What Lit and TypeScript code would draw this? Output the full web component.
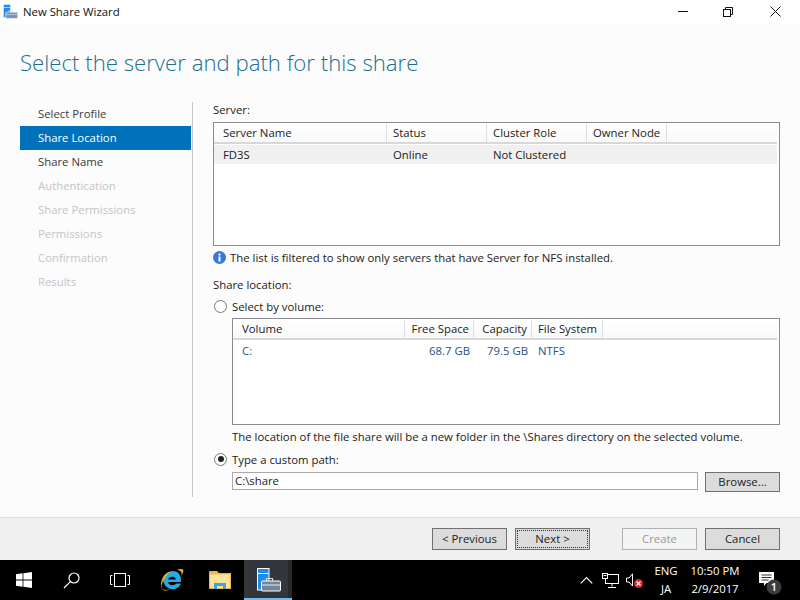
import { LitElement, html, css } from "lit";
import { customElement } from "lit/decorators.js";

const steps = [
  { label: "Select Profile", cls: "" },
  { label: "Share Location", cls: "active" },
  { label: "Share Name", cls: "" },
  { label: "Authentication", cls: "off" },
  { label: "Share Permissions", cls: "off" },
  { label: "Permissions", cls: "off" },
  { label: "Confirmation", cls: "off" },
  { label: "Results", cls: "off" },
];

const shareIcon = (size: number, outline: string, body: string) => html`
  <svg width=${size} height=${size} viewBox="0 0 24 24">
    <rect x="0.500" y="0.500" width="11.500" height="21.500" fill="#1f8be6" stroke=${outline} stroke-width="1"></rect>
    <path d="M1 5.500h10.500" stroke=${outline} stroke-width="1"></path>
    <path d="M9.500 13v-2.500h6V13" fill="none" stroke="#d5dade" stroke-width="1.200"></path>
    <rect x="4.500" y="13" width="19" height="10" rx="1" fill=${body} stroke="#fff" stroke-width="1"></rect>
    <path d="M5 17h18" stroke="#e6eaee" stroke-width="1"></path>
  </svg>
`;

@customElement("app-root")
export class AppRoot extends LitElement {
  static styles = css`
    :host {
      display: flex;
      flex-direction: column;
      width: 800px;
      height: 600px;
      overflow: hidden;
      font-family: "Open Sans", "Noto Sans", sans-serif;
      font-size: 11.35px;
      color: #222;
      background: #fcfcfc;
    }
    .titlebar {
      height: 23px;
      background: #fff;
      display: flex;
      align-items: center;
      flex: none;
    }
    .appicon {
      display: flex;
      margin: 0 5px 0 3px;
    }
    .title {
      flex: 1;
      color: #111;
    }
    .winbtn {
      width: 45px;
      height: 23px;
      display: flex;
      align-items: center;
      justify-content: center;
    }
    .winbtn.close {
      width: 50px;
    }
    .heading {
      height: 56px;
      flex: none;
      padding: 23px 0 0 20px;
      box-sizing: border-box;
      font-size: 22.2px;
      font-weight: 300;
      line-height: 34px;
      color: #1b6f92;
    }
    .body {
      flex: 1;
      display: flex;
      min-height: 0;
      padding-top: 23px;
    }
    .nav {
      width: 172px;
      height: 395px;
      margin-left: 20px;
      margin-right: 20px;
      box-shadow: 1px 0 0 #c6c6c6;
    }
    .step {
      width: 171px;
      height: 24px;
      line-height: 24px;
      padding-left: 18px;
      box-sizing: border-box;
      color: #3a3a3a;
    }
    .step.active {
      background: #0072bc;
      color: #fff;
    }
    .step.off {
      color: #c4c4c4;
    }
    .main {
      width: 567px;
      margin-left: 1px;
      display: flex;
      flex-direction: column;
    }
    .label {
      height: 15px;
      line-height: 15px;
    }
    .list {
      border: 1px solid #8a8a92;
      background: #fff;
      box-sizing: border-box;
      padding: 1px 2px 0 0;
      flex: none;
    }
    .list.servers {
      height: 124px;
      margin-top: 5px;
    }
    .list.volumes {
      height: 107px;
      margin: 4px 0 0 19px;
    }
    .head,
    .row {
      display: grid;
    }
    .head {
      height: 20px;
      line-height: 18px;
      box-sizing: border-box;
      border-bottom: 2px solid #d8d8d8;
      background: linear-gradient(#fff, #f8f9f9);
    }
    .servers .head,
    .servers .row {
      grid-template-columns: 173px 100px 100px 80px 1fr;
    }
    .volumes .head,
    .volumes .row {
      grid-template-columns: 172px 69px 58px 71px 1fr;
    }
    .head > span {
      border-right: 1px solid #dedede;
      padding-left: 6px;
      white-space: nowrap;
    }
    .head > span:first-child,
    .row > span:first-child {
      padding-left: 9px;
    }
    .head > span:last-child {
      border-right: none;
    }
    .row {
      margin-top: 1px;
      height: 19px;
      line-height: 20px;
    }
    .row > span {
      padding-left: 6px;
      white-space: nowrap;
    }
    .servers .row {
      background: #f0f0f0;
    }
    .volumes .row {
      color: #26528a;
    }
    .volumes .head > span:nth-child(2),
    .volumes .head > span:nth-child(3),
    .volumes .row > span:nth-child(2),
    .volumes .row > span:nth-child(3) {
      text-align: right;
      padding: 0 4px 0 0;
    }
    .info {
      display: flex;
      align-items: center;
      gap: 4px;
      height: 16px;
      margin-top: 3px;
    }
    .share-label {
      margin-top: 12px;
    }
    .radio {
      display: flex;
      align-items: center;
      gap: 5px;
      height: 16px;
      margin: 6px 0 0 1px;
    }
    .dot {
      width: 13px;
      height: 13px;
      box-sizing: border-box;
      border: 1px solid #7a7a7a;
      border-radius: 50%;
      background: #fff;
      display: flex;
      align-items: center;
      justify-content: center;
    }
    .dot.on::after {
      content: "";
      width: 6px;
      height: 6px;
      border-radius: 50%;
      background: #222;
    }
    .note {
      margin: 4px 0 0 19px;
      height: 16px;
      line-height: 16px;
    }
    .path {
      display: flex;
      margin: 5px 0 0 19px;
      gap: 7px;
      align-items: flex-start;
    }
    .input {
      width: 466px;
      height: 18px;
      line-height: 16px;
      box-sizing: border-box;
      border: 1px solid #a9a9a9;
      background: #fff;
      padding-left: 2px;
    }
    .btn {
      width: 75px;
      height: 22px;
      line-height: 20px;
      box-sizing: border-box;
      border: 1px solid #707070;
      background: #dcdcdc;
      text-align: center;
      flex: none;
      color: #222;
    }
    .path .btn {
      height: 20px;
      line-height: 18px;
    }
    .btn.default {
      position: relative;
    }
    .btn.default::after {
      content: "";
      position: absolute;
      inset: 1px;
      border: 1px dotted #333;
    }
    .btn.disabled {
      background: #f4f4f4;
      border-color: #adb2b5;
      color: #9a9a9a;
    }
    .footer {
      height: 43px;
      flex: none;
      box-sizing: border-box;
      border-top: 1px solid #dfdfdf;
      background: #f0f0f0;
      display: flex;
      justify-content: flex-end;
      align-items: flex-start;
      padding: 10px 20px 0 0;
    }
    .footer .btn + .btn {
      margin-left: 8px;
    }
    .footer .btn.disabled {
      margin-left: 32px;
    }
    .taskbar {
      height: 40px;
      flex: none;
      background: #000;
      display: flex;
      color: #fff;
    }
    .tile {
      width: 48px;
      height: 40px;
      display: flex;
      align-items: center;
      justify-content: center;
      box-sizing: border-box;
    }
    .tile.gap {
      margin-left: 4px;
    }
    .tile.current {
      background: linear-gradient(to right, #33363a 44px, #26282b 44px);
      border-bottom: 2px solid #76b9ed;
      padding: 2px 0 0 2px;
    }
    .tray {
      margin-left: auto;
      display: flex;
      align-items: center;
    }
    .tray-icon {
      width: 24px;
      display: flex;
      justify-content: center;
    }
    .lang,
    .clock {
      text-align: center;
      line-height: 18px;
    }
    .lang {
      width: 34px;
      margin-left: 3px;
    }
    .clock {
      width: 68px;
      margin-left: -2px;
    }
    .notif {
      width: 51px;
      padding-left: 9px;
      box-sizing: border-box;
      display: flex;
    }
    .notif svg {
      margin-top: 6px;
    }
  `;

  renderTaskbar() {
    return html`
      <div class="taskbar">
        <div class="tile">
          <svg width="16" height="16" viewBox="0 0 16 16" fill="#fff">
            <path d="M0 2.300 6.600 1.300V7.600H0ZM7.400 1.200 16 0V7.600H7.400ZM0 8.400H6.600V14.700L0 13.700ZM7.400 8.400H16V16L7.400 14.800Z"></path>
          </svg>
        </div>
        <div class="tile">
          <svg width="18" height="18" viewBox="0 0 18 18" fill="none" stroke="#fff" stroke-width="1.200">
            <circle cx="11" cy="7" r="5"></circle>
            <path d="M7.400 10.600 1 17"></path>
          </svg>
        </div>
        <div class="tile">
          <svg width="20" height="14" viewBox="0 0 20 14" fill="none" stroke="#fff" stroke-width="1">
            <rect x="4.500" y="0.500" width="11" height="13"></rect>
            <path d="M2.500 2.500H.5v9h2M17.500 2.500h2v9h-2"></path>
          </svg>
        </div>
        <div class="tile gap">
          <svg width="24" height="24" viewBox="0 0 24 24">
            <path d="M3 12C4 6 9 3 13 3c5 0 8 4 8 9v2H8c.3 3 5 4.500 8.500 1.500H21c-2 5-8 7-12 5-4-2-6-6-6-8Zm5.200-.6h7.600C15.500 8 9 8 8.200 11.400Z" fill="#2ba7e2"></path>
            <path d="M2 20.500C0 16 6 7 11 3.500 6 4 1.500 9 1 16c0 3 .5 5.500 3 6.500 1.500.5 4-.2 6-1.500-3 1-6.500 1.500-8-.500ZM17 2c2.500-1 5-1.500 6-.5 1 1.200 0 3.500-1.500 6C22 4.500 21.500 2.500 17 2Z" fill="#e6b31e"></path>
          </svg>
        </div>
        <div class="tile">
          <svg width="22" height="18" viewBox="0 0 22 18">
            <path d="M0 1A1 1 0 0 1 1 0H8l2 2H22V18H1a1 1 0 0 1-1-1Z" fill="#e9b94f"></path>
            <path d="M1 3.500H21V17H1Z" fill="#fbe49a"></path>
            <path d="M5 18V12h12v6h-3v-3H8v3Z" fill="#3aa5e3"></path>
          </svg>
        </div>
        <div class="tile current">${shareIcon(24, "#fff", "#74879a")}</div>
        <div class="tray">
          <div class="tray-icon">
            <svg width="13" height="8" viewBox="0 0 13 8" fill="none" stroke="#fff" stroke-width="1.200">
              <path d="M.7 7.300 6.500 1.500l5.800 5.800"></path>
            </svg>
          </div>
          <div class="tray-icon">
            <svg width="17" height="15" viewBox="0 0 17 15" fill="none" stroke="#fff" stroke-width="1">
              <rect x="3.500" y="1.500" width="13" height="9"></rect>
              <path d="M10 10.500v3M6 14.500h8"></path>
              <rect x="0.500" y="0.500" width="5" height="5" fill="#000"></rect>
              <path d="M1.500 2.500h3"></path>
            </svg>
          </div>
          <div class="tray-icon">
            <svg width="17" height="15" viewBox="0 0 17 15">
              <path d="M.5 5H3L6.500.8V13L3 9H.5Z" fill="none" stroke="#fff" stroke-width="1"></path>
              <circle cx="12.500" cy="10.500" r="4.500" fill="#d9262c"></circle>
              <path d="M10.500 8.500l4 4m0-4-4 4" stroke="#fff" stroke-width="1.300"></path>
            </svg>
          </div>
          <div class="lang">ENG<br />JA</div>
          <div class="clock">10:50 PM<br />2/9/2017</div>
          <div class="notif">
            <svg width="24" height="26" viewBox="0 0 24 26">
              <path d="M1 2H16V13H8.500L6 16V13H1Z" fill="#fff"></path>
              <path d="M3.500 5h10M3.500 7.500h10M3.500 10h7" stroke="#333" stroke-width="1"></path>
              <circle cx="16" cy="17" r="7.500" fill="#3d3d3d"></circle>
              <text x="16" y="21" fill="#fff" font-size="11" font-weight="600" text-anchor="middle">1</text>
            </svg>
          </div>
        </div>
      </div>
    `;
  }

  render() {
    return html`
      <div class="titlebar">
        <span class="appicon">${shareIcon(15, "#fff", "#6f93b8")}</span>
        <span class="title">New Share Wizard</span>
        <div class="winbtn">
          <svg width="10" height="1" viewBox="0 0 10 1"><rect width="10" height="1" fill="#111"></rect></svg>
        </div>
        <div class="winbtn">
          <svg width="10" height="10" viewBox="0 0 10 10" fill="none" stroke="#111" stroke-width="1">
            <rect x="0.500" y="2.500" width="7" height="7"></rect>
            <path d="M2.500 2.500v-2h7v7h-2"></path>
          </svg>
        </div>
        <div class="winbtn close">
          <svg width="11" height="11" viewBox="0 0 11 11" fill="none" stroke="#111" stroke-width="1">
            <path d="M.5.500l10 10m0-10-10 10"></path>
          </svg>
        </div>
      </div>
      <div class="heading">Select the server and path for this share</div>
      <div class="body">
        <div class="nav">
          ${steps.map((s) => html`<div class="step ${s.cls}">${s.label}</div>`)}
        </div>
        <div class="main">
          <div class="label">Server:</div>
          <div class="list servers">
            <div class="head">
              <span>Server Name</span><span>Status</span><span>Cluster Role</span><span>Owner Node</span><span></span>
            </div>
            <div class="row">
              <span>FD3S</span><span>Online</span><span>Not Clustered</span><span></span><span></span>
            </div>
          </div>
          <div class="info">
            <svg width="13" height="13" viewBox="0 0 13 13">
              <circle cx="6.500" cy="6.500" r="6.500" fill="#3a78d8"></circle>
              <rect x="5.500" y="5.500" width="2" height="5" fill="#fff"></rect>
              <rect x="5.500" y="2.500" width="2" height="2" fill="#fff"></rect>
            </svg>
            <span>The list is filtered to show only servers that have Server for NFS installed.</span>
          </div>
          <div class="label share-label">Share location:</div>
          <div class="radio"><span class="dot"></span><span>Select by volume:</span></div>
          <div class="list volumes">
            <div class="head">
              <span>Volume</span><span>Free Space</span><span>Capacity</span><span>File System</span><span></span>
            </div>
            <div class="row">
              <span>C:</span><span>68.7 GB</span><span>79.5 GB</span><span>NTFS</span><span></span>
            </div>
          </div>
          <div class="note">The location of the file share will be a new folder in the \\Shares directory on the selected volume.</div>
          <div class="radio"><span class="dot on"></span><span>Type a custom path:</span></div>
          <div class="path">
            <div class="input">C:\\share</div>
            <div class="btn">Browse...</div>
          </div>
        </div>
      </div>
      <div class="footer">
        <div class="btn">&lt; Previous</div>
        <div class="btn default">Next &gt;</div>
        <div class="btn disabled">Create</div>
        <div class="btn">Cancel</div>
      </div>
      ${this.renderTaskbar()}
    `;
  }
}
